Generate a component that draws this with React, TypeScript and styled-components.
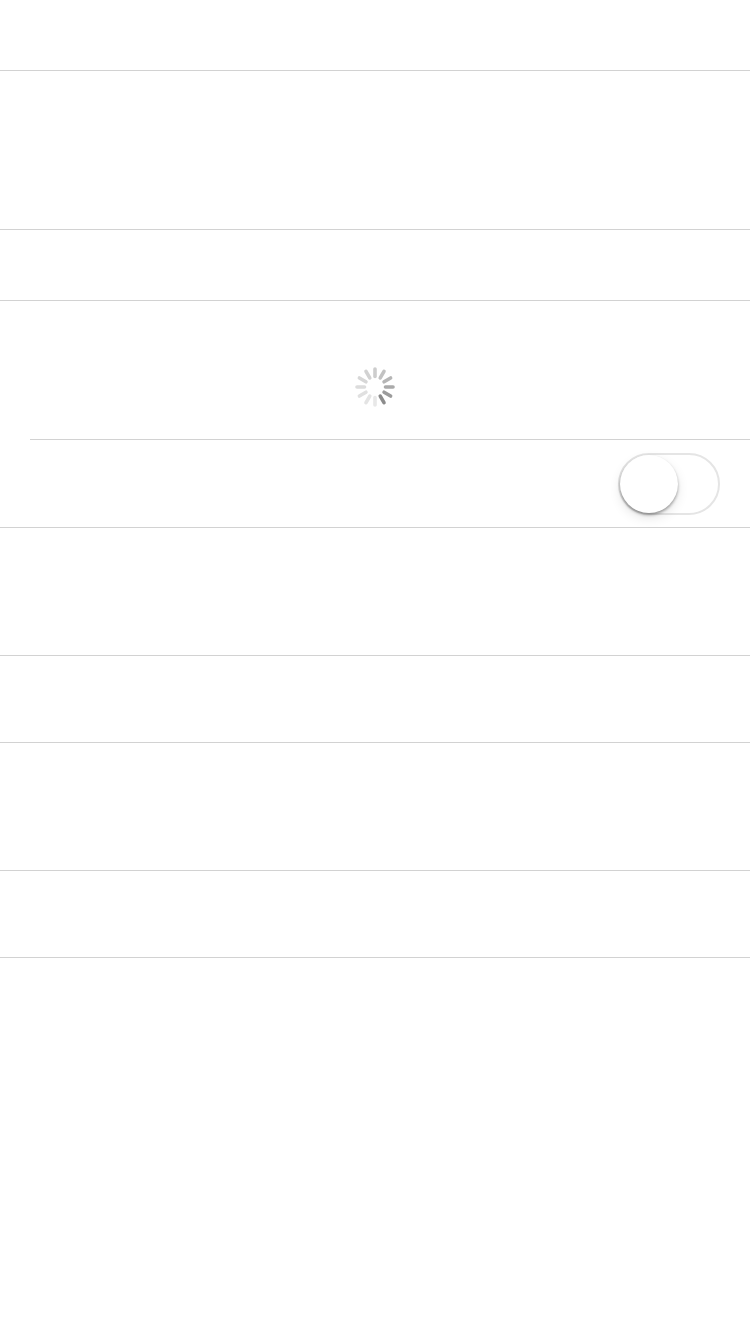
import React from "react";
import styled, { createGlobalStyle } from "styled-components";

const Global = createGlobalStyle`
  html, body { margin: 0; padding: 0; background: #ffffff; }
  body { font-family: "Liberation Sans", Arial, sans-serif; }
`;

const Page = styled.div`
  width: 750px;
  min-height: 1334px;
  background: #ffffff;
  display: flex;
  flex-direction: column;
`;

const Section = styled.div<{ $h: number }>`
  height: ${(p) => p.$h}px;
  box-sizing: border-box;
  border-bottom: 1px solid #d2d2d2;
`;

const SpinnerSection = styled.div`
  height: 138px;
  box-sizing: border-box;
  padding-top: 66px;
  display: flex;
  justify-content: center;
  align-items: flex-start;
`;

const InsetRow = styled.div`
  margin-left: 30px;
  height: 88px;
  box-sizing: border-box;
  border-top: 1px solid #d2d2d2;
  display: flex;
  align-items: center;
  justify-content: flex-end;
  padding-right: 30px;
`;

const Group = styled.div`
  border-bottom: 1px solid #d2d2d2;
  display: flex;
  flex-direction: column;
`;

const Track = styled.div`
  position: relative;
  width: 102px;
  height: 62px;
  box-sizing: border-box;
  border: 2px solid #e5e5e5;
  border-radius: 31px;
  background: #ffffff;
`;

const Knob = styled.div`
  position: absolute;
  left: 0;
  top: 0;
  width: 58px;
  height: 58px;
  border-radius: 50%;
  background: #ffffff;
  box-shadow: 0 2px 3px rgba(0, 0, 0, 0.35), 0 5px 12px rgba(0, 0, 0, 0.1);
`;

const Spinner: React.FC = () => {
  const colors = [
    "#cdcdcd",
    "#c2c2c2",
    "#b6b6b6",
    "#aaaaaa",
    "#9c9c9c",
    "#8c8c8c",
    "#e8e8e8",
    "#e4e4e4",
    "#e0e0e0",
    "#dcdcdc",
    "#d7d7d7",
    "#d2d2d2",
  ];
  return (
    <svg width="40" height="40" viewBox="0 0 40 40">
      {colors.map((c, i) => (
        <line
          key={i}
          x1="20"
          y1="2"
          x2="20"
          y2="9.5"
          stroke={c}
          strokeWidth="3.6"
          strokeLinecap="round"
          transform={`rotate(${i * 30} 20 20)`}
        />
      ))}
    </svg>
  );
};

export default function App() {
  return (
    <Page>
      <Global />
      <Section $h={71} />
      <Section $h={159} />
      <Section $h={71} />
      <Group>
        <SpinnerSection>
          <Spinner />
        </SpinnerSection>
        <InsetRow>
          <Track>
            <Knob />
          </Track>
        </InsetRow>
      </Group>
      <Section $h={128} />
      <Section $h={87} />
      <Section $h={128} />
      <Section $h={87} />
    </Page>
  );
}
